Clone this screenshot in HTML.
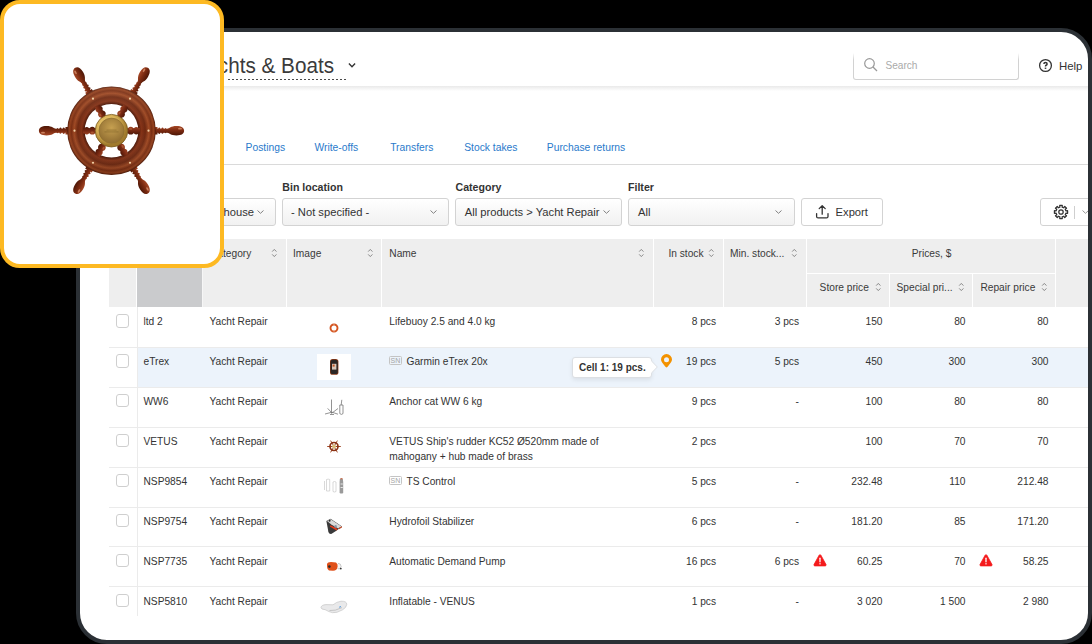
<!DOCTYPE html>
<html><head><meta charset="utf-8">
<style>
*{margin:0;padding:0;box-sizing:border-box}
html,body{width:1092px;height:644px;overflow:hidden;background:#000;font-family:"Liberation Sans",sans-serif;color:#333}
#frame{position:absolute;left:76px;top:28px;width:1016px;height:616px;border:4px solid #2b3035;border-radius:31px;background:#fff;overflow:hidden}
#inner{position:absolute;left:-80px;top:-32px;width:1092px;height:644px}
.t{position:absolute;white-space:nowrap;line-height:1}
.box{position:absolute}
#card{position:absolute;left:0;top:0;width:224px;height:268px;border:4px solid #fdb922;border-radius:20px;background:#fff;z-index:10}
</style></head><body>
<div id="frame"><div id="inner">
<div class="t" style="right:758px;top:55.88px;font-size:20.7px;color:#3b3b3b;transform:scaleY(1.07);transform-origin:0 17.5px;">Yachts &amp; Boats</div>
<div class="box" style="left:228px;top:79px;width:120px;height:1px;background:repeating-linear-gradient(90deg,#4a4a4a 0 2.5px,transparent 2.5px 4px)"></div>
<svg class="box" style="left:346.5px;top:60px" width="10" height="10" viewBox="0 0 10 10"><path d="M1.9 3.6 L5 6.7 L8.1 3.6" fill="none" stroke="#333" stroke-width="1.4"/></svg>
<div class="box" style="left:80px;top:86px;width:1008px;height:5px;background:linear-gradient(#e9e9e9,#fff)"></div>
<div class="box" style="left:853px;top:50px;width:166px;height:30px;border:1px solid #d2d2d2;border-top:none;border-radius:0 0 3px 3px"></div>
<div class="box" style="left:852px;top:50px;width:168px;height:10px;background:linear-gradient(#fff 30%,rgba(255,255,255,0))"></div>
<svg class="box" style="left:862px;top:57px" width="17" height="16" viewBox="0 0 17 16"><circle cx="7.5" cy="6.5" r="4.8" fill="none" stroke="#999" stroke-width="1.2"/><path d="M11 10 L15 14" stroke="#999" stroke-width="1.3"/></svg>
<div class="t" style="left:885.5px;top:61.45px;font-size:10.1px;color:#aaa;">Search</div>
<svg class="box" style="left:1038.3px;top:58.2px" width="15" height="15" viewBox="0 0 15 15"><circle cx="7.5" cy="7.5" r="5.9" fill="none" stroke="#333" stroke-width="1.3"/><path d="M5.9 6.1 Q5.9 4.6 7.5 4.6 Q9.1 4.6 9.1 5.9 Q9.1 6.8 8.1 7.2 Q7.5 7.5 7.5 8.4" fill="none" stroke="#333" stroke-width="1.5"/><rect x="6.7" y="9.6" width="1.6" height="1.3" fill="#333"/></svg>
<div class="t" style="left:1059px;top:61.05px;font-size:11.4px;color:#333;">Help</div>
<div class="t" style="left:245.6px;top:143.18px;font-size:10.3px;color:#2a7acb;">Postings</div>
<div class="t" style="left:314.5px;top:143.18px;font-size:10.3px;color:#2a7acb;">Write-offs</div>
<div class="t" style="left:390.2px;top:143.18px;font-size:10.3px;color:#2a7acb;">Transfers</div>
<div class="t" style="left:464.2px;top:143.18px;font-size:10.3px;color:#2a7acb;">Stock takes</div>
<div class="t" style="left:546.8px;top:143.18px;font-size:10.3px;color:#2a7acb;">Purchase returns</div>
<div class="box" style="left:80px;top:164px;width:1008px;height:1px;background:#dadada"></div>
<div class="t" style="left:282.3px;top:182.43px;font-size:10.6px;color:#333;font-weight:700;">Bin location</div>
<div class="t" style="left:455.5px;top:182.43px;font-size:10.6px;color:#333;font-weight:700;">Category</div>
<div class="t" style="left:628px;top:182.43px;font-size:10.6px;color:#333;font-weight:700;">Filter</div>
<div class="box" style="left:150px;top:198px;width:126px;height:28px;border:1px solid #d3d3d3;border-radius:3px;background:linear-gradient(#ffffff,#f1f1f1)"></div>
<div class="t" style="right:838px;top:206.52px;font-size:11.2px;color:#333;">Warehouse</div>
<svg class="box" style="left:255.9px;top:208.6px" width="9" height="6" viewBox="0 0 9 6"><path d="M1.5 1.5 L4.5 4.3 L7.5 1.5" fill="none" stroke="#808080" stroke-width="1"/></svg>
<div class="box" style="left:282px;top:198px;width:167px;height:28px;border:1px solid #d3d3d3;border-radius:3px;background:linear-gradient(#ffffff,#f1f1f1)"></div>
<div class="t" style="left:291px;top:206.52px;font-size:11.2px;color:#333;">- Not specified -</div>
<svg class="box" style="left:428.5px;top:208.6px" width="9" height="6" viewBox="0 0 9 6"><path d="M1.5 1.5 L4.5 4.3 L7.5 1.5" fill="none" stroke="#808080" stroke-width="1"/></svg>
<div class="box" style="left:455px;top:198px;width:167px;height:28px;border:1px solid #d3d3d3;border-radius:3px;background:linear-gradient(#ffffff,#f1f1f1)"></div>
<div class="t" style="left:464.7px;top:206.52px;font-size:11.2px;color:#333;">All products &gt; Yacht Repair</div>
<svg class="box" style="left:601.5px;top:208.6px" width="9" height="6" viewBox="0 0 9 6"><path d="M1.5 1.5 L4.5 4.3 L7.5 1.5" fill="none" stroke="#808080" stroke-width="1"/></svg>
<div class="box" style="left:628px;top:198px;width:167px;height:28px;border:1px solid #d3d3d3;border-radius:3px;background:linear-gradient(#ffffff,#f1f1f1)"></div>
<div class="t" style="left:638px;top:206.52px;font-size:11.2px;color:#333;">All</div>
<svg class="box" style="left:774.3px;top:208.6px" width="9" height="6" viewBox="0 0 9 6"><path d="M1.5 1.5 L4.5 4.3 L7.5 1.5" fill="none" stroke="#808080" stroke-width="1"/></svg>
<div class="box" style="left:801px;top:198px;width:82px;height:28px;border:1px solid #d3d3d3;border-radius:3px;background:#fff"></div>
<svg class="box" style="left:814px;top:203px" width="16" height="17" viewBox="0 0 16 17"><path d="M8.2 2.8 L8.2 11.2 M5.2 5.6 L8.2 2.6 L11.2 5.6" fill="none" stroke="#333" stroke-width="1.3" stroke-linecap="round" stroke-linejoin="round"/><path d="M2.6 10.6 L2.6 13.4 Q2.6 14.9 4.1 14.9 L12.5 14.9 Q14 14.9 14 13.4 L14 10.6" fill="none" stroke="#333" stroke-width="1.3" stroke-linecap="round"/></svg>
<div class="t" style="left:835.6px;top:206.52px;font-size:11.2px;color:#333;">Export</div>
<div class="box" style="left:1040px;top:198px;width:80px;height:28px;border:1px solid #d3d3d3;border-radius:3px;background:#fff"></div>
<svg class="box" style="left:1053px;top:203.7px" width="16" height="16" viewBox="0 0 16 16"><path d="M12.87 6.88 L14.58 6.72 L14.58 9.28 L12.87 9.12 L12.24 10.65 L13.55 11.75 L11.75 13.55 L10.65 12.24 L9.12 12.87 L9.28 14.58 L6.72 14.58 L6.88 12.87 L5.35 12.24 L4.25 13.55 L2.45 11.75 L3.76 10.65 L3.13 9.12 L1.42 9.28 L1.42 6.72 L3.13 6.88 L3.76 5.35 L2.45 4.25 L4.25 2.45 L5.35 3.76 L6.88 3.13 L6.72 1.42 L9.28 1.42 L9.12 3.13 L10.65 3.76 L11.75 2.45 L13.55 4.25 L12.24 5.35 Z" fill="none" stroke="#333" stroke-width="1.25" stroke-linejoin="round"/><circle cx="8" cy="8" r="2.2" fill="none" stroke="#333" stroke-width="1.25"/></svg>
<div class="box" style="left:1074px;top:205.5px;width:1px;height:13px;background:#cfcfcf"></div>
<svg class="box" style="left:1081px;top:209px" width="9" height="6" viewBox="0 0 9 6"><path d="M1.5 1.5 L4.5 4.3 L7.5 1.5" fill="none" stroke="#999" stroke-width="1"/></svg>
<div class="box" style="left:109px;top:239px;width:979px;height:68px;background:#eeeeee"></div>
<div class="box" style="left:137px;top:239px;width:65px;height:68px;background:#cacbcd"></div>
<div class="box" style="left:202px;top:239px;width:1px;height:68px;background:#f6f6f6"></div>
<div class="box" style="left:136px;top:239px;width:1px;height:68px;background:#fff"></div>
<div class="box" style="left:286px;top:239px;width:1px;height:68px;background:#fff"></div>
<div class="box" style="left:381px;top:239px;width:1px;height:68px;background:#fff"></div>
<div class="box" style="left:653px;top:239px;width:1px;height:68px;background:#fff"></div>
<div class="box" style="left:723px;top:239px;width:1px;height:68px;background:#fff"></div>
<div class="box" style="left:806px;top:239px;width:1px;height:68px;background:#fff"></div>
<div class="box" style="left:1055px;top:239px;width:1px;height:68px;background:#fff"></div>
<div class="box" style="left:807px;top:273px;width:248px;height:1px;background:#fff"></div>
<div class="box" style="left:889px;top:274px;width:1px;height:33px;background:#fff"></div>
<div class="box" style="left:972px;top:274px;width:1px;height:33px;background:#fff"></div>
<div class="t" style="left:210px;top:248.97px;font-size:10.2px;color:#3a3a3a;">Category</div>
<svg class="box" style="left:271.3px;top:248px" width="7" height="10" viewBox="0 0 7 10"><path d="M1.2 3.6 L3.3 1.4 L5.4 3.6 M1.2 6.4 L3.3 8.6 L5.4 6.4" fill="none" stroke="#888" stroke-width="1"/></svg>
<div class="t" style="left:293px;top:248.97px;font-size:10.2px;color:#3a3a3a;">Image</div>
<svg class="box" style="left:367.3px;top:248px" width="7" height="10" viewBox="0 0 7 10"><path d="M1.2 3.6 L3.3 1.4 L5.4 3.6 M1.2 6.4 L3.3 8.6 L5.4 6.4" fill="none" stroke="#888" stroke-width="1"/></svg>
<div class="t" style="left:389.3px;top:248.97px;font-size:10.2px;color:#3a3a3a;">Name</div>
<svg class="box" style="left:638.3000000000001px;top:248px" width="7" height="10" viewBox="0 0 7 10"><path d="M1.2 3.6 L3.3 1.4 L5.4 3.6 M1.2 6.4 L3.3 8.6 L5.4 6.4" fill="none" stroke="#888" stroke-width="1"/></svg>
<div class="t" style="right:388.5px;top:248.97px;font-size:10.2px;color:#3a3a3a;">In stock</div>
<svg class="box" style="left:708.3000000000001px;top:248px" width="7" height="10" viewBox="0 0 7 10"><path d="M1.2 3.6 L3.3 1.4 L5.4 3.6 M1.2 6.4 L3.3 8.6 L5.4 6.4" fill="none" stroke="#888" stroke-width="1"/></svg>
<div class="t" style="left:730px;top:248.97px;font-size:10.2px;color:#3a3a3a;">Min. stock...</div>
<svg class="box" style="left:791.3000000000001px;top:248px" width="7" height="10" viewBox="0 0 7 10"><path d="M1.2 3.6 L3.3 1.4 L5.4 3.6 M1.2 6.4 L3.3 8.6 L5.4 6.4" fill="none" stroke="#888" stroke-width="1"/></svg>
<div class="t" style="left:911.7px;top:248.97px;font-size:10.2px;color:#3a3a3a;">Prices, $</div>
<div class="t" style="left:819.6px;top:283.37px;font-size:10.2px;color:#3a3a3a;">Store price</div>
<svg class="box" style="left:874.8000000000001px;top:282px" width="7" height="10" viewBox="0 0 7 10"><path d="M1.2 3.6 L3.3 1.4 L5.4 3.6 M1.2 6.4 L3.3 8.6 L5.4 6.4" fill="none" stroke="#888" stroke-width="1"/></svg>
<div class="t" style="left:896.5px;top:283.37px;font-size:10.2px;color:#3a3a3a;">Special pri...</div>
<svg class="box" style="left:957.9000000000001px;top:282px" width="7" height="10" viewBox="0 0 7 10"><path d="M1.2 3.6 L3.3 1.4 L5.4 3.6 M1.2 6.4 L3.3 8.6 L5.4 6.4" fill="none" stroke="#888" stroke-width="1"/></svg>
<div class="t" style="left:980.4px;top:283.37px;font-size:10.2px;color:#3a3a3a;">Repair price</div>
<svg class="box" style="left:1040.8px;top:282px" width="7" height="10" viewBox="0 0 7 10"><path d="M1.2 3.6 L3.3 1.4 L5.4 3.6 M1.2 6.4 L3.3 8.6 L5.4 6.4" fill="none" stroke="#888" stroke-width="1"/></svg>
<div class="box" style="left:0;top:307px;width:1092px;height:309px;overflow:hidden"><div class="box" style="left:0;top:-307px;width:1092px;height:644px">
<div class="box" style="left:137px;top:347px;width:951px;height:40px;background:#ecf3fb"></div>
<div class="box" style="left:109px;top:346.8px;width:979px;height:1px;background:#ebebeb"></div>
<div class="box" style="left:109px;top:386.73px;width:979px;height:1px;background:#ebebeb"></div>
<div class="box" style="left:109px;top:426.66px;width:979px;height:1px;background:#ebebeb"></div>
<div class="box" style="left:109px;top:466.59px;width:979px;height:1px;background:#ebebeb"></div>
<div class="box" style="left:109px;top:506.52000000000004px;width:979px;height:1px;background:#ebebeb"></div>
<div class="box" style="left:109px;top:546.4499999999999px;width:979px;height:1px;background:#ebebeb"></div>
<div class="box" style="left:109px;top:586.3799999999999px;width:979px;height:1px;background:#ebebeb"></div>
<div class="box" style="left:137px;top:307px;width:1px;height:309px;background:#ebebeb"></div>
<div class="box" style="left:115.8px;top:314.2px;width:13.4px;height:13.4px;border:1px solid #cfcfcf;border-radius:3px;background:#fff"></div>
<div class="t" style="left:143.5px;top:317.27px;font-size:10.2px;color:#333;">ltd 2</div>
<div class="t" style="left:209.5px;top:317.27px;font-size:10.2px;color:#333;">Yacht Repair</div>
<div class="t" style="left:389.3px;top:317.27px;font-size:10.2px;color:#333;">Lifebuoy 2.5 and 4.0 kg</div>
<div class="t" style="right:376px;top:317.27px;font-size:10.2px;color:#333;">8 pcs</div>
<div class="t" style="right:293px;top:317.27px;font-size:10.2px;color:#333;">3 pcs</div>
<div class="t" style="right:209.5px;top:317.27px;font-size:10.2px;color:#333;">150</div>
<div class="t" style="right:126.5px;top:317.27px;font-size:10.2px;color:#333;">80</div>
<div class="t" style="right:43.5px;top:317.27px;font-size:10.2px;color:#333;">80</div>
<div class="box" style="left:115.8px;top:354.13px;width:13.4px;height:13.4px;border:1px solid #cfcfcf;border-radius:3px;background:#fff"></div>
<div class="t" style="left:143.5px;top:357.20px;font-size:10.2px;color:#333;">eTrex</div>
<div class="t" style="left:209.5px;top:357.20px;font-size:10.2px;color:#333;">Yacht Repair</div>
<div class="box" style="left:389px;top:355.73px;width:13px;height:9.4px;border:1px solid #c4c4c4;border-radius:1.5px"></div>
<div class="t" style="left:390.6px;top:357.10px;font-size:7px;color:#a4a4a4;">SN</div>
<div class="t" style="left:406.5px;top:357.20px;font-size:10.2px;color:#333;">Garmin eTrex 20x</div>
<div class="t" style="right:376px;top:357.20px;font-size:10.2px;color:#333;">19 pcs</div>
<div class="t" style="right:293px;top:357.20px;font-size:10.2px;color:#333;">5 pcs</div>
<div class="t" style="right:209.5px;top:357.20px;font-size:10.2px;color:#333;">450</div>
<div class="t" style="right:126.5px;top:357.20px;font-size:10.2px;color:#333;">300</div>
<div class="t" style="right:43.5px;top:357.20px;font-size:10.2px;color:#333;">300</div>
<div class="box" style="left:115.8px;top:394.06px;width:13.4px;height:13.4px;border:1px solid #cfcfcf;border-radius:3px;background:#fff"></div>
<div class="t" style="left:143.5px;top:397.13px;font-size:10.2px;color:#333;">WW6</div>
<div class="t" style="left:209.5px;top:397.13px;font-size:10.2px;color:#333;">Yacht Repair</div>
<div class="t" style="left:389.3px;top:397.13px;font-size:10.2px;color:#333;">Anchor cat WW 6 kg</div>
<div class="t" style="right:376px;top:397.13px;font-size:10.2px;color:#333;">9 pcs</div>
<div class="t" style="right:293px;top:397.13px;font-size:10.2px;color:#333;">-</div>
<div class="t" style="right:209.5px;top:397.13px;font-size:10.2px;color:#333;">100</div>
<div class="t" style="right:126.5px;top:397.13px;font-size:10.2px;color:#333;">80</div>
<div class="t" style="right:43.5px;top:397.13px;font-size:10.2px;color:#333;">80</div>
<div class="box" style="left:115.8px;top:433.98999999999995px;width:13.4px;height:13.4px;border:1px solid #cfcfcf;border-radius:3px;background:#fff"></div>
<div class="t" style="left:143.5px;top:437.06px;font-size:10.2px;color:#333;">VETUS</div>
<div class="t" style="left:209.5px;top:437.06px;font-size:10.2px;color:#333;">Yacht Repair</div>
<div class="t" style="left:389.3px;top:437.06px;font-size:10.2px;color:#333;">VETUS Ship's rudder KC52 Ø520mm made of</div>
<div class="t" style="left:389.3px;top:452.06px;font-size:10.2px;color:#333;">mahogany + hub made of brass</div>
<div class="t" style="right:376px;top:437.06px;font-size:10.2px;color:#333;">2 pcs</div>
<div class="t" style="right:209.5px;top:437.06px;font-size:10.2px;color:#333;">100</div>
<div class="t" style="right:126.5px;top:437.06px;font-size:10.2px;color:#333;">70</div>
<div class="t" style="right:43.5px;top:437.06px;font-size:10.2px;color:#333;">70</div>
<div class="box" style="left:115.8px;top:473.92px;width:13.4px;height:13.4px;border:1px solid #cfcfcf;border-radius:3px;background:#fff"></div>
<div class="t" style="left:143.5px;top:476.99px;font-size:10.2px;color:#333;">NSP9854</div>
<div class="t" style="left:209.5px;top:476.99px;font-size:10.2px;color:#333;">Yacht Repair</div>
<div class="box" style="left:389px;top:475.52000000000004px;width:13px;height:9.4px;border:1px solid #c4c4c4;border-radius:1.5px"></div>
<div class="t" style="left:390.6px;top:476.89px;font-size:7px;color:#a4a4a4;">SN</div>
<div class="t" style="left:406.5px;top:476.99px;font-size:10.2px;color:#333;">TS Control</div>
<div class="t" style="right:376px;top:476.99px;font-size:10.2px;color:#333;">5 pcs</div>
<div class="t" style="right:293px;top:476.99px;font-size:10.2px;color:#333;">-</div>
<div class="t" style="right:209.5px;top:476.99px;font-size:10.2px;color:#333;">232.48</div>
<div class="t" style="right:126.5px;top:476.99px;font-size:10.2px;color:#333;">110</div>
<div class="t" style="right:43.5px;top:476.99px;font-size:10.2px;color:#333;">212.48</div>
<div class="box" style="left:115.8px;top:513.85px;width:13.4px;height:13.4px;border:1px solid #cfcfcf;border-radius:3px;background:#fff"></div>
<div class="t" style="left:143.5px;top:516.92px;font-size:10.2px;color:#333;">NSP9754</div>
<div class="t" style="left:209.5px;top:516.92px;font-size:10.2px;color:#333;">Yacht Repair</div>
<div class="t" style="left:389.3px;top:516.92px;font-size:10.2px;color:#333;">Hydrofoil Stabilizer</div>
<div class="t" style="right:376px;top:516.92px;font-size:10.2px;color:#333;">6 pcs</div>
<div class="t" style="right:293px;top:516.92px;font-size:10.2px;color:#333;">-</div>
<div class="t" style="right:209.5px;top:516.92px;font-size:10.2px;color:#333;">181.20</div>
<div class="t" style="right:126.5px;top:516.92px;font-size:10.2px;color:#333;">85</div>
<div class="t" style="right:43.5px;top:516.92px;font-size:10.2px;color:#333;">171.20</div>
<div class="box" style="left:115.8px;top:553.78px;width:13.4px;height:13.4px;border:1px solid #cfcfcf;border-radius:3px;background:#fff"></div>
<div class="t" style="left:143.5px;top:556.85px;font-size:10.2px;color:#333;">NSP7735</div>
<div class="t" style="left:209.5px;top:556.85px;font-size:10.2px;color:#333;">Yacht Repair</div>
<div class="t" style="left:389.3px;top:556.85px;font-size:10.2px;color:#333;">Automatic Demand Pump</div>
<div class="t" style="right:376px;top:556.85px;font-size:10.2px;color:#333;">16 pcs</div>
<div class="t" style="right:293px;top:556.85px;font-size:10.2px;color:#333;">6 pcs</div>
<div class="t" style="right:209.5px;top:556.85px;font-size:10.2px;color:#333;">60.25</div>
<div class="t" style="right:126.5px;top:556.85px;font-size:10.2px;color:#333;">70</div>
<div class="t" style="right:43.5px;top:556.85px;font-size:10.2px;color:#333;">58.25</div>
<div class="box" style="left:115.8px;top:593.71px;width:13.4px;height:13.4px;border:1px solid #cfcfcf;border-radius:3px;background:#fff"></div>
<div class="t" style="left:143.5px;top:596.78px;font-size:10.2px;color:#333;">NSP5810</div>
<div class="t" style="left:209.5px;top:596.78px;font-size:10.2px;color:#333;">Yacht Repair</div>
<div class="t" style="left:389.3px;top:596.78px;font-size:10.2px;color:#333;">Inflatable - VENUS</div>
<div class="t" style="right:376px;top:596.78px;font-size:10.2px;color:#333;">1 pcs</div>
<div class="t" style="right:293px;top:596.78px;font-size:10.2px;color:#333;">-</div>
<div class="t" style="right:209.5px;top:596.78px;font-size:10.2px;color:#333;">3 020</div>
<div class="t" style="right:126.5px;top:596.78px;font-size:10.2px;color:#333;">1 500</div>
<div class="t" style="right:43.5px;top:596.78px;font-size:10.2px;color:#333;">2 980</div>
<svg class="box" style="left:300px;top:307px" width="70" height="309" viewBox="300 307 70 309"><circle cx="334" cy="328" r="3.5" fill="none" stroke="#d4541f" stroke-width="1.9"/><path d="M334 324.2 v1.4 M334 330.4 v1.4" stroke="#f0c0a8" stroke-width="0.8"/></svg>
<div class="box" style="left:317px;top:354px;width:34px;height:26px;background:#fff"></div>
<svg class="box" style="left:300px;top:307px" width="70" height="309" viewBox="300 307 70 309"><rect x="330" y="359" width="8.4" height="15.8" rx="2.6" fill="#8a3a18"/><rect x="330.6" y="359.7" width="7.2" height="14.4" rx="2.2" fill="#2b2624"/><rect x="332" y="363.8" width="4.4" height="5.8" fill="#d9c7b9"/><rect x="332.6" y="364.6" width="2" height="2" fill="#c0521e"/><g stroke="#777" stroke-width="0.8" fill="none"><path d="M331.5 399.5 v14.2 M325 414 l7 -1.8 l6 2 M332 413 l-4.3 -4.6 M332 413 l6 -4.5 M330 414.5 h4"/><path d="M341.8 399.8 l-0.6 5.2 M339.8 405 h3.2 v8.6 q-1.6 1.6 -3.2 0 z"/></g><g transform="translate(334 446.5)" stroke="#a04a28" stroke-width="1"><path d="M-6.8 0 H6.8 M-3.4 -5.9 L3.4 5.9 M3.4 -5.9 L-3.4 5.9"/></g><circle cx="334" cy="446.5" r="4" fill="none" stroke="#8a3214" stroke-width="1.7"/><circle cx="334" cy="446.5" r="1.9" fill="#d8bb78"/><g stroke="#c8c8c8" stroke-width="0.7" fill="none"><path d="M324.5 481 v9 M326.5 479.5 q1.8 -0.8 3.2 0 v11.5 h-3.2 z M333 482 q1.6 -1 3 0 v9.5 q-1.5 1 -3 0 z"/></g><path d="M339.8 479 q1.5 -1.5 3 0 l0.4 3 v11 q-1.8 1 -3.6 0 v-11 z" fill="#9a9a9a"/><path d="M340.5 478.8 h2" stroke="#d05a30" stroke-width="1"/><path d="M340.6 484 h2.2 M340.6 487.5 h2.2" stroke="#eee" stroke-width="0.9"/><path d="M326.4 521 L330.6 518.8 L342 526.4 L336 531 L331.2 534 Q329 534.2 328.4 532 Z" fill="#3a3a3a"/><path d="M327 521 L330.6 519.2 L341.6 526.4 L338.4 528.6 L331.6 524.8 Z" fill="#dadada"/><path d="M330.6 525.2 L337.6 529 L336.6 530.6 L329.8 526.6 Z" fill="#e63a1a"/><circle cx="329.6" cy="520.8" r="1" fill="#2e2e2e"/><circle cx="335.6" cy="526.4" r="1.3" fill="#8d98a8"/><path d="M338.6 528 L341.8 526.2 L342 527.4 L339 529.2 Z" fill="#c24a26"/><path d="M327 564 Q327.5 562 331 562 L336 562.4 Q338 563.5 337.8 566.8 Q337 570.8 333 570.8 L329 570.5 Q326.6 569.2 327 564 Z" fill="#e0501a"/><circle cx="329.4" cy="566.6" r="1.3" fill="#2a2a2a"/><path d="M338 563.4 l2.2 0.6 l1 2.6 l-1.6 2.4 l-2 -0.4" fill="#f4f4f4" stroke="#999" stroke-width="0.5"/><circle cx="340.8" cy="568.6" r="0.9" fill="#333"/><path d="M321 607.6 Q321.2 605 326 604.6 L333 604.8 Q336.5 601.8 341 601.2 Q346.5 601 346.8 604.2 Q346.6 607.5 342.6 609.8 L337 612.3 Q332 613.4 329 611.6 L325 609.6 Q321.2 609.6 321 607.6 Z" fill="#e9e9ea" stroke="#bdbdbd" stroke-width="0.6"/><path d="M329.5 610.5 Q335 611.2 342 607.6" fill="none" stroke="#a9a9a9" stroke-width="0.6"/><path d="M339.2 607.2 l1.8 -0.6" stroke="#3a8bd8" stroke-width="0.9"/></svg>
<div class="box" style="left:572px;top:356.5px;width:79.5px;height:21px;background:#fff;border:1px solid #dcdfe3;border-radius:3px;box-shadow:0 2px 4px rgba(0,0,0,.08)"></div>
<svg class="box" style="left:650.5px;top:359.5px" width="8" height="15" viewBox="0 0 8 15"><path d="M0 0.5 L6.3 7 L0 13.5" fill="#fff" stroke="#dcdfe3" stroke-width="1"/><path d="M0 1.5 L0 12.5" stroke="#fff" stroke-width="1.2"/></svg>
<div class="t" style="left:579px;top:362.94px;font-size:10px;color:#333;font-weight:700;">Cell 1: 19 pcs.</div>
<svg class="box" style="left:660.2px;top:353.6px" width="13" height="15" viewBox="0 0 13 15"><path d="M6.5 13.4 Q5.8 13.4 4.6 11.8 C2.8 9.6 1 7.8 1 5.6 A5.5 5.5 0 0 1 12 5.6 C12 7.8 10.2 9.6 8.4 11.8 Q7.2 13.4 6.5 13.4 Z" fill="#f39200"/><circle cx="6.5" cy="5.7" r="2.5" fill="#edf3fb"/></svg>
<svg class="box" style="left:812.7px;top:553.6px" width="14" height="13" viewBox="0 0 14 13"><path d="M7 0.7 Q7.6 0.7 8 1.4 L13 10.6 Q13.4 11.8 12.2 11.9 H1.8 Q0.6 11.8 1 10.6 L6 1.4 Q6.4 0.7 7 0.7 Z" fill="#f41a1c" stroke="#f41a1c" stroke-width="0.8" stroke-linejoin="round"/><path d="M7 4.2 V7.8" stroke="#fff" stroke-width="1.3" stroke-linecap="round"/><rect x="6.35" y="9.2" width="1.3" height="1.2" fill="#fff"/></svg>
<svg class="box" style="left:979.2px;top:553.6px" width="14" height="13" viewBox="0 0 14 13"><path d="M7 0.7 Q7.6 0.7 8 1.4 L13 10.6 Q13.4 11.8 12.2 11.9 H1.8 Q0.6 11.8 1 10.6 L6 1.4 Q6.4 0.7 7 0.7 Z" fill="#f41a1c" stroke="#f41a1c" stroke-width="0.8" stroke-linejoin="round"/><path d="M7 4.2 V7.8" stroke="#fff" stroke-width="1.3" stroke-linecap="round"/><rect x="6.35" y="9.2" width="1.3" height="1.2" fill="#fff"/></svg>
</div></div>
</div></div>
<div id="card"><svg style="position:absolute;left:-4px;top:-4px" width="224" height="268" viewBox="0 0 224 268"><defs><linearGradient id="hg" x1="0" y1="-5" x2="0" y2="5" gradientUnits="userSpaceOnUse"><stop offset="0" stop-color="#a84a28"/><stop offset="0.45" stop-color="#7e2c12"/><stop offset="1" stop-color="#4a1505"/></linearGradient><linearGradient id="sg" x1="0" y1="-4" x2="0" y2="4" gradientUnits="userSpaceOnUse"><stop offset="0" stop-color="#9e4424"/><stop offset="0.5" stop-color="#762812"/><stop offset="1" stop-color="#4a1505"/></linearGradient><radialGradient id="ring" cx="0" cy="0" r="44.5" gradientUnits="userSpaceOnUse"><stop offset="0.6" stop-color="#4a1606"/><stop offset="0.67" stop-color="#843216"/><stop offset="0.76" stop-color="#6e2810"/><stop offset="0.84" stop-color="#9e4822"/><stop offset="0.9" stop-color="#7a2e12"/><stop offset="0.95" stop-color="#94401c"/><stop offset="1" stop-color="#4a1606"/></radialGradient><linearGradient id="ringsh" x1="0" y1="-44" x2="0" y2="44" gradientUnits="userSpaceOnUse"><stop offset="0" stop-color="#fff" stop-opacity="0.08"/><stop offset="0.5" stop-color="#fff" stop-opacity="0"/><stop offset="1" stop-color="#000" stop-opacity="0.12"/></linearGradient><radialGradient id="brass" cx="-3" cy="-4" r="18" gradientUnits="userSpaceOnUse"><stop offset="0" stop-color="#f4da88"/><stop offset="0.6" stop-color="#dcb65a"/><stop offset="1" stop-color="#a07a2c"/></radialGradient><radialGradient id="brass2" cx="0" cy="-3" r="14" gradientUnits="userSpaceOnUse"><stop offset="0" stop-color="#c6a050"/><stop offset="1" stop-color="#957234"/></radialGradient></defs><g transform="translate(111.5 130.7)"><g transform="rotate(0)"><path d="M43 -3.8 L46 -3.8 L46 3.8 L43 3.8 Z M45 -2 L58 -2 L58 2 L45 2 Z" fill="url(#hg)"/><ellipse cx="47.8" cy="0" rx="1.3" ry="3.3" fill="url(#hg)"/><ellipse cx="51" cy="0" rx="1.3" ry="3.1" fill="url(#hg)"/><ellipse cx="54" cy="0" rx="1.1" ry="2.6" fill="url(#hg)"/><path d="M56 -2 C58 -2.2 59 -4.7 65 -4.7 C70 -4.7 72.6 -2.8 72.6 0 C72.6 2.8 70 4.7 65 4.7 C59 4.7 58 2.2 56 2 Z" fill="url(#hg)"/><ellipse cx="68.5" cy="-2" rx="2" ry="0.9" fill="#e6a07a" opacity="0.7"/></g><g transform="rotate(60)"><path d="M43 -3.8 L46 -3.8 L46 3.8 L43 3.8 Z M45 -2 L58 -2 L58 2 L45 2 Z" fill="url(#hg)"/><ellipse cx="47.8" cy="0" rx="1.3" ry="3.3" fill="url(#hg)"/><ellipse cx="51" cy="0" rx="1.3" ry="3.1" fill="url(#hg)"/><ellipse cx="54" cy="0" rx="1.1" ry="2.6" fill="url(#hg)"/><path d="M56 -2 C58 -2.2 59 -4.7 65 -4.7 C70 -4.7 72.6 -2.8 72.6 0 C72.6 2.8 70 4.7 65 4.7 C59 4.7 58 2.2 56 2 Z" fill="url(#hg)"/><ellipse cx="68.5" cy="-2" rx="2" ry="0.9" fill="#e6a07a" opacity="0.7"/></g><g transform="rotate(120)"><path d="M43 -3.8 L46 -3.8 L46 3.8 L43 3.8 Z M45 -2 L58 -2 L58 2 L45 2 Z" fill="url(#hg)"/><ellipse cx="47.8" cy="0" rx="1.3" ry="3.3" fill="url(#hg)"/><ellipse cx="51" cy="0" rx="1.3" ry="3.1" fill="url(#hg)"/><ellipse cx="54" cy="0" rx="1.1" ry="2.6" fill="url(#hg)"/><path d="M56 -2 C58 -2.2 59 -4.7 65 -4.7 C70 -4.7 72.6 -2.8 72.6 0 C72.6 2.8 70 4.7 65 4.7 C59 4.7 58 2.2 56 2 Z" fill="url(#hg)"/><ellipse cx="68.5" cy="-2" rx="2" ry="0.9" fill="#e6a07a" opacity="0.7"/></g><g transform="rotate(180)"><path d="M43 -3.8 L46 -3.8 L46 3.8 L43 3.8 Z M45 -2 L58 -2 L58 2 L45 2 Z" fill="url(#hg)"/><ellipse cx="47.8" cy="0" rx="1.3" ry="3.3" fill="url(#hg)"/><ellipse cx="51" cy="0" rx="1.3" ry="3.1" fill="url(#hg)"/><ellipse cx="54" cy="0" rx="1.1" ry="2.6" fill="url(#hg)"/><path d="M56 -2 C58 -2.2 59 -4.7 65 -4.7 C70 -4.7 72.6 -2.8 72.6 0 C72.6 2.8 70 4.7 65 4.7 C59 4.7 58 2.2 56 2 Z" fill="url(#hg)"/><ellipse cx="68.5" cy="-2" rx="2" ry="0.9" fill="#e6a07a" opacity="0.7"/></g><g transform="rotate(240)"><path d="M43 -3.8 L46 -3.8 L46 3.8 L43 3.8 Z M45 -2 L58 -2 L58 2 L45 2 Z" fill="url(#hg)"/><ellipse cx="47.8" cy="0" rx="1.3" ry="3.3" fill="url(#hg)"/><ellipse cx="51" cy="0" rx="1.3" ry="3.1" fill="url(#hg)"/><ellipse cx="54" cy="0" rx="1.1" ry="2.6" fill="url(#hg)"/><path d="M56 -2 C58 -2.2 59 -4.7 65 -4.7 C70 -4.7 72.6 -2.8 72.6 0 C72.6 2.8 70 4.7 65 4.7 C59 4.7 58 2.2 56 2 Z" fill="url(#hg)"/><ellipse cx="68.5" cy="-2" rx="2" ry="0.9" fill="#e6a07a" opacity="0.7"/></g><g transform="rotate(300)"><path d="M43 -3.8 L46 -3.8 L46 3.8 L43 3.8 Z M45 -2 L58 -2 L58 2 L45 2 Z" fill="url(#hg)"/><ellipse cx="47.8" cy="0" rx="1.3" ry="3.3" fill="url(#hg)"/><ellipse cx="51" cy="0" rx="1.3" ry="3.1" fill="url(#hg)"/><ellipse cx="54" cy="0" rx="1.1" ry="2.6" fill="url(#hg)"/><path d="M56 -2 C58 -2.2 59 -4.7 65 -4.7 C70 -4.7 72.6 -2.8 72.6 0 C72.6 2.8 70 4.7 65 4.7 C59 4.7 58 2.2 56 2 Z" fill="url(#hg)"/><ellipse cx="68.5" cy="-2" rx="2" ry="0.9" fill="#e6a07a" opacity="0.7"/></g><path d="M0 -44.3 A44.3 44.3 0 1 1 0 44.3 A44.3 44.3 0 1 1 0 -44.3 Z M0 -26.8 A26.8 26.8 0 1 0 0 26.8 A26.8 26.8 0 1 0 0 -26.8 Z" fill="url(#ring)" fill-rule="evenodd"/><path d="M0 -44.3 A44.3 44.3 0 1 1 0 44.3 A44.3 44.3 0 1 1 0 -44.3 Z M0 -26.8 A26.8 26.8 0 1 0 0 26.8 A26.8 26.8 0 1 0 0 -26.8 Z" fill="url(#ringsh)" fill-rule="evenodd"/><g transform="rotate(0)"><path d="M15 -2.6 L28.5 -2.6 L28.5 2.6 L15 2.6 Z" fill="url(#sg)"/><ellipse cx="19.2" cy="0" rx="3.1" ry="3.9" fill="url(#sg)"/><ellipse cx="24.8" cy="0" rx="2.8" ry="3.7" fill="url(#sg)"/><ellipse cx="19.2" cy="-1.8" rx="1.6" ry="0.9" fill="#c06a40" opacity="0.6"/></g><g transform="rotate(60)"><path d="M15 -2.6 L28.5 -2.6 L28.5 2.6 L15 2.6 Z" fill="url(#sg)"/><ellipse cx="19.2" cy="0" rx="3.1" ry="3.9" fill="url(#sg)"/><ellipse cx="24.8" cy="0" rx="2.8" ry="3.7" fill="url(#sg)"/><ellipse cx="19.2" cy="-1.8" rx="1.6" ry="0.9" fill="#c06a40" opacity="0.6"/></g><g transform="rotate(120)"><path d="M15 -2.6 L28.5 -2.6 L28.5 2.6 L15 2.6 Z" fill="url(#sg)"/><ellipse cx="19.2" cy="0" rx="3.1" ry="3.9" fill="url(#sg)"/><ellipse cx="24.8" cy="0" rx="2.8" ry="3.7" fill="url(#sg)"/><ellipse cx="19.2" cy="-1.8" rx="1.6" ry="0.9" fill="#c06a40" opacity="0.6"/></g><g transform="rotate(180)"><path d="M15 -2.6 L28.5 -2.6 L28.5 2.6 L15 2.6 Z" fill="url(#sg)"/><ellipse cx="19.2" cy="0" rx="3.1" ry="3.9" fill="url(#sg)"/><ellipse cx="24.8" cy="0" rx="2.8" ry="3.7" fill="url(#sg)"/><ellipse cx="19.2" cy="-1.8" rx="1.6" ry="0.9" fill="#c06a40" opacity="0.6"/></g><g transform="rotate(240)"><path d="M15 -2.6 L28.5 -2.6 L28.5 2.6 L15 2.6 Z" fill="url(#sg)"/><ellipse cx="19.2" cy="0" rx="3.1" ry="3.9" fill="url(#sg)"/><ellipse cx="24.8" cy="0" rx="2.8" ry="3.7" fill="url(#sg)"/><ellipse cx="19.2" cy="-1.8" rx="1.6" ry="0.9" fill="#c06a40" opacity="0.6"/></g><g transform="rotate(300)"><path d="M15 -2.6 L28.5 -2.6 L28.5 2.6 L15 2.6 Z" fill="url(#sg)"/><ellipse cx="19.2" cy="0" rx="3.1" ry="3.9" fill="url(#sg)"/><ellipse cx="24.8" cy="0" rx="2.8" ry="3.7" fill="url(#sg)"/><ellipse cx="19.2" cy="-1.8" rx="1.6" ry="0.9" fill="#c06a40" opacity="0.6"/></g><circle cx="-37.00" cy="0.00" r="1.1" fill="#f2d2a8"/><circle cx="37.00" cy="0.00" r="1.1" fill="#f2d2a8"/><circle cx="18.50" cy="-32.04" r="1.1" fill="#f2d2a8"/><circle cx="-18.50" cy="-32.04" r="1.1" fill="#f2d2a8"/><circle cx="18.50" cy="32.04" r="1.1" fill="#f2d2a8"/><circle cx="-18.50" cy="32.04" r="1.1" fill="#f2d2a8"/><circle r="16.3" fill="url(#brass)" stroke="#7a5c22" stroke-width="0.8"/><circle r="12.6" fill="url(#brass2)" stroke="#8a6c2c" stroke-width="0.6"/><path d="M-7 1.2 H7 M-5 -0.6 H5" stroke="#7d6026" stroke-width="0.5"/></g></svg></div>
</body></html>
